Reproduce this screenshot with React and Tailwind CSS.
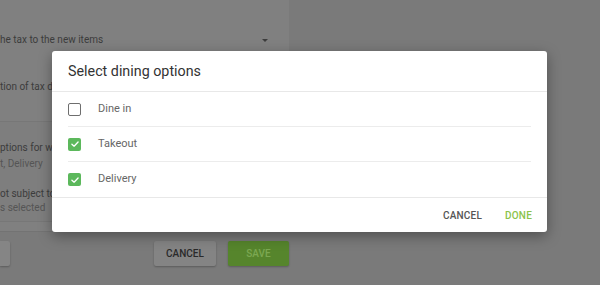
import React from 'react';

const font = { fontFamily: 'Roboto, "Noto Sans", Arial, sans-serif' };

function Check({ checked }) {
  if (!checked) {
    return <span className="w-[13px] h-[13px] rounded-[2px] border-[1.5px] border-[#6e6e6e] bg-white shrink-0" />;
  }
  return (
    <span className="w-[13px] h-[13px] rounded-[2px] bg-[#5cb85c] shrink-0 flex items-center justify-center">
      <svg viewBox="0 0 12 12" className="w-[10px] h-[10px]">
        <path d="M2.3 6.2 L4.9 8.6 L9.7 3.6" fill="none" stroke="#fff" strokeWidth="1.6" strokeLinecap="round" strokeLinejoin="round" />
      </svg>
    </span>
  );
}

const OPTIONS = [
  { label: 'Dine in', checked: false },
  { label: 'Takeout', checked: true },
  { label: 'Delivery', checked: true },
];

export default function App() {
  return (
    <div className="relative w-[600px] h-[285px] overflow-hidden bg-[#7a7a7a]" style={font}>
      {/* page behind the dimmed overlay */}
      <div className="w-[289px] flex flex-col">
        <div className="bg-[#808080] h-[232px] flex flex-col border-b border-[#737373]">
          <div className="h-[52px] flex items-end pb-[4px] pr-[21px] justify-between text-[10px] text-[#3c3c3c] whitespace-nowrap">
            <span className="pb-[1px]">he tax to the new items</span>
            <span className="w-0 h-0 border-l-[3px] border-r-[3px] border-t-[3px] border-l-transparent border-r-transparent border-t-[#3c3c3c] mb-[6px]" />
          </div>
          <div className="h-[69px] pt-[27px] text-[10px] text-[#3c3c3c] whitespace-nowrap">tion of tax d</div>
          <div className="bg-[#7e7e7e] border-t border-b border-[#777] h-[101px] flex flex-col text-[10px] whitespace-nowrap">
            <div className="pt-[19px] text-[#3c3c3c] leading-[14px]">ptions for w</div>
            <div className="text-[#555] leading-[14px] pt-[2px]">t, Delivery</div>
            <div className="pt-[16px] text-[#3c3c3c] leading-[14px]">ot subject to</div>
            <div className="text-[#555] leading-[14px]">s selected</div>
          </div>
        </div>
        <div className="flex items-center pt-[9px]">
          <div className="w-[10px] h-[25px] bg-[#858585] rounded-r-[2px] shadow-[0_1px_2px_rgba(0,0,0,0.25)]" />
          <div className="ml-[144px] w-[62px] h-[25px] bg-[#848484] rounded-[2px] shadow-[0_1px_2px_rgba(0,0,0,0.25)] flex items-center justify-center text-[10px] font-medium text-[#2a2a2a]">CANCEL</div>
          <div className="ml-[12px] w-[61px] h-[25px] bg-[#56852c] rounded-[2px] shadow-[0_1px_2px_rgba(0,0,0,0.25)] flex items-center justify-center text-[10px] font-medium text-[#7ca852]">SAVE</div>
        </div>
      </div>

      {/* dialog */}
      <div className="absolute left-[52px] top-[51px] w-[495px] h-[181px] bg-white rounded-[3px] shadow-[0_4px_14px_rgba(0,0,0,0.35)] flex flex-col">
        <div className="h-[41px] px-[16px] flex items-center border-b border-[#e8e8e8]">
          <span className="text-[14.3px] text-[#333] pt-[1px]">Select dining options</span>
        </div>
        <div className="px-[16px] flex flex-col">
          {OPTIONS.map((o, i) => (
            <div
              key={o.label}
              className={`h-[35px] flex items-center ${i < OPTIONS.length - 1 ? 'border-b border-[#ececec]' : ''}`}
            >
              <Check checked={o.checked} />
              <span className="ml-[17px] text-[11px] text-[#666]">{o.label}</span>
            </div>
          ))}
        </div>
        <div className="flex-1 border-t border-[#e8e8e8] flex items-center justify-end pr-[15px] gap-[23px] text-[10px] font-medium tracking-[0.2px]">
          <span className="text-[#555]">CANCEL</span>
          <span className="text-[#8bc34a]">DONE</span>
        </div>
      </div>
    </div>
  );
}
